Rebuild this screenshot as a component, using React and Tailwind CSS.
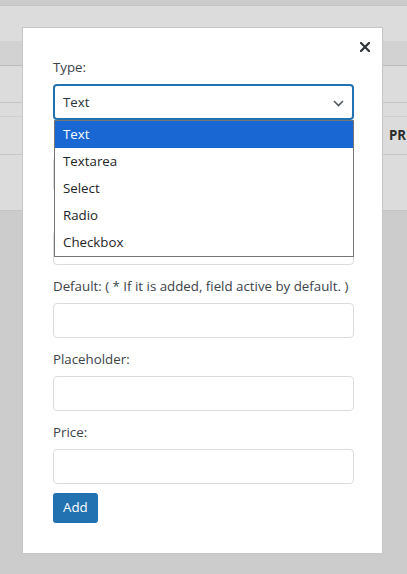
import React from 'react';

function Field({ label, children }) {
  return (
    <div className="mb-[11px]">
      <label className="block h-5 leading-5 mb-[7px] text-[#3c434a]">{label}</label>
      {children}
    </div>
  );
}

function TextInput() {
  return <div className="h-[35px] w-full rounded border border-[#dcdcde] bg-white" />;
}

export default function App() {
  const options = ['Text', 'Textarea', 'Select', 'Radio', 'Checkbox'];

  return (
    <div
      className="relative h-[574px] w-[407px] overflow-hidden bg-[#cccccc] text-[13.3px]"
      style={{ fontFamily: '"Open Sans", "Noto Sans", sans-serif' }}
    >
      {/* Page behind the overlay */}
      <div className="h-[6px] border-b border-[#c4c4c4] bg-[#cccccc]" />
      <div className="h-[35px] bg-[#dcdcdc]" />
      <div className="h-[25px] border-b border-[#bcbcbc] bg-[#d2d2d2]" />
      <div className="h-[37px] border-b border-[#c4c4c4] bg-[#dcdcdc]" />
      <div className="h-[14px] border-b border-[#d0d0d0] bg-[#dcdcdc]" />
      <div className="flex h-[38px] items-center border-b border-[#c8c8c8] bg-[#dcdcdc] pl-[389px]">
        <span className="whitespace-nowrap font-bold text-[#2c2c2c]">PRICE</span>
      </div>
      <div className="h-[56px] border-b border-[#c4c4c4] bg-[#dcdcdc]" />

      {/* Modal */}
      <div className="absolute left-[22px] top-[27px] w-[361px] border border-[#c6c6c6] bg-white pb-[30px] pl-[30px] pr-[28px] pt-[29px]">
        <button className="absolute right-[12px] top-[14px] text-[#2c3338]">
          <svg width="10" height="10" viewBox="0 0 10 10">
            <path d="M1 1L9 9M9 1L1 9" stroke="currentColor" strokeWidth="2.2" strokeLinecap="square" />
          </svg>
        </button>

        <div className="mb-[10px]">
          <label className="block h-5 leading-5 mb-[7px] text-[#3c434a]">Type:</label>
          <div className="relative">
            <div className="flex h-[36px] items-center justify-between rounded border-2 border-[#2271b1] pl-[8px] pr-[8px] pt-[2px] text-[#2c3338]">
              <span>Text</span>
              <svg width="11" height="7" viewBox="0 0 11 7" className="text-[#50575e]">
                <path d="M1 1L5.5 5.5L10 1" fill="none" stroke="currentColor" strokeWidth="1.6" />
              </svg>
            </div>
            <div className="absolute left-[1px] right-0 top-[36px] z-10 border border-[#767676] bg-white">
              {options.map((opt, i) => (
                <div
                  key={opt}
                  className={
                    i === 0
                      ? 'flex h-[27px] items-center bg-[#1967d2] pl-[8px] text-white'
                      : 'flex h-[27px] items-center pl-[8px] text-[#1d2327]'
                  }
                >
                  {opt}
                </div>
              ))}
            </div>
          </div>
        </div>

        {/* fields hidden under the open list */}
        <Field label="">
          <TextInput />
        </Field>
        <Field label="">
          <TextInput />
        </Field>
        <Field label="Default: ( * If it is added, field active by default. )">
          <TextInput />
        </Field>
        <Field label="Placeholder:">
          <TextInput />
        </Field>
        <Field label="Price:">
          <TextInput />
        </Field>

        <button className="-mt-[2px] h-[30px] rounded-[3px] bg-[#2271b1] px-[10px] text-white">Add</button>
      </div>
    </div>
  );
}
